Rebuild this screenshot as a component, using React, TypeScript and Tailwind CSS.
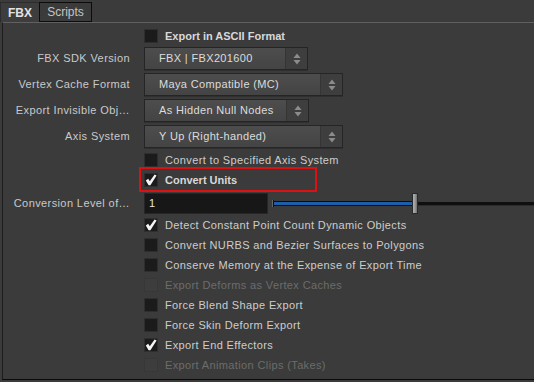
import React from 'react'

const font = "font-['Liberation_Sans',Arial,sans-serif]"

type Opt = {
    label: string;
    checked?: boolean;
    disabled?: boolean;
    bold?: boolean;
};

const CheckMark = () => (
    <svg width="12" height="12" viewBox="0 0 12 12" className="block">
        <path d="M0.8 6.4 L3.2 4.8 L4.8 7.2 L9.6 0.6 L11.6 1.4 L5.4 11.2 L3.6 11.2 Z" fill="#f4f4f4" />
    </svg>
)

const CheckBox = ({ checked, disabled }: { checked?: boolean; disabled?: boolean }) => (
    <div
        className={`w-[14px] h-[14px] flex items-center justify-center border ${
            disabled ? 'bg-[#3d3d3d] border-[#373737]' : 'bg-[#1b1b1b] border-[#2e2e2e]'
        }`}
    >
        {checked && <CheckMark />}
    </div>
)

const CheckRow = ({ label, checked, disabled, bold }: Opt) => (
    <div className="grid grid-cols-[141px_1fr] h-[20px] items-center">
        <div />
        <div className="flex items-center gap-[7px]">
            <CheckBox checked={checked} disabled={disabled} />
            <span
                className={`text-[11px] whitespace-nowrap ${bold ? 'font-bold text-[#d8d8d8]' : 'tracking-[0.37px]'} ${
                    disabled ? 'text-[#6c6c6c]' : 'text-[#cdcdcd]'
                }`}
            >
                {label}
            </span>
        </div>
    </div>
)

const Arrows = () => (
    <svg width="8" height="12" viewBox="0 0 8 12">
        <path d="M4 0.5 L7.5 5 L0.5 5 Z" fill="#8c8c8c" />
        <path d="M4 11.5 L7.5 7 L0.5 7 Z" fill="#8c8c8c" />
    </svg>
)

const Select = ({ label, value, w }: { label: string; value: string; w: string }) => (
    <div className="grid grid-cols-[141px_1fr] items-center">
        <div className="text-right pr-[14px] text-[11px] tracking-[0.4px] text-[#c9c9c9] whitespace-nowrap">{label}</div>
        <div
            className={`${w} h-[23px] flex border border-[#252525] bg-gradient-to-b from-[#4d4d4d] to-[#444444] shadow-[0_1px_0_#2f2f2f]`}
        >
            <div className="flex-1 flex items-center pl-[14px] text-[11px] tracking-[0.35px] text-[#dcdcdc] whitespace-nowrap">
                {value}
            </div>
            <div className="w-[22px] flex items-center justify-center bg-[#3e3e3e] border-l border-[#353535]">
                <Arrows />
            </div>
        </div>
    </div>
)

const Slider = () => (
    <div className="flex-1 h-[21px] flex items-center ml-[4px]">
        <div className="w-[2px] h-[7px] bg-[#111] border-l border-[#666]" />
        <div className="w-[138px] h-[5px] bg-[#1d5ea8] border-y border-[#0d0d0d]" />
        <div className="w-[6px] h-[21px] bg-gradient-to-r from-[#b0b0b0] via-[#9a9a9a] to-[#707070] border border-[#2a2a2a]" />
        <div className="flex-1 h-[4px] bg-[#0f0f0f] border-b border-[#2b2b2b]" />
    </div>
)

const bottomRows: Opt[] = [
    { label: 'Detect Constant Point Count Dynamic Objects', checked: true },
    { label: 'Convert NURBS and Bezier Surfaces to Polygons' },
    { label: 'Conserve Memory at the Expense of Export Time' },
    { label: 'Export Deforms as Vertex Caches', disabled: true },
    { label: 'Force Blend Shape Export' },
    { label: 'Force Skin Deform Export' },
    { label: 'Export End Effectors', checked: true },
    { label: 'Export Animation Clips (Takes)', disabled: true },
]

export default function App() {
    return (
        <div className={`w-[534px] h-[382px] bg-[#3b3b3b] overflow-hidden ${font}`}>
            {/* tabs */}
            <div className="h-[22px] flex items-end pt-[2px]">
                <div className="w-[39px] h-[20px] flex items-center justify-center border-t border-l border-[#2c2c2c] bg-[#3d3d3d] text-[12px] font-bold text-[#e2e2e2]">
                    FBX
                </div>
                <div className="w-[53px] h-[20px] flex items-center justify-center border border-[#0c0c0c] text-[12px] text-[#c4c4c4]">
                    Scripts
                </div>
            </div>

            <div className="ml-[2px] h-[358px] border-l border-[#1c1c1c] border-t border-t-[#606060] border-b border-b-[#0a0a0a] pt-[3px]">
                <CheckRow label="Export in ASCII Format" bold />

                <div className="flex flex-col gap-[3px] mt-[1px]">
                    <Select label="FBX SDK Version" value="FBX | FBX201600" w="w-[164px]" />
                    <Select label="Vertex Cache Format" value="Maya Compatible (MC)" w="w-[199px]" />
                    <Select label="Export Invisible Obj…" value="As Hidden Null Nodes" w="w-[165px]" />
                    <Select label="Axis System" value="Y Up (Right-handed)" w="w-[199px]" />
                </div>

                <div className="mt-[2px]">
                    <CheckRow label="Convert to Specified Axis System" />
                </div>
                <div className="relative">
                    <CheckRow label="Convert Units" checked bold />
                    <div className="absolute left-[136px] top-[-3px] w-[178px] h-[25px] border-2 border-[#dd1111] pointer-events-none" />
                </div>

                <div className="grid grid-cols-[141px_1fr] items-center mt-[3px] h-[21px]">
                    <div className="text-right pr-[14px] text-[11px] tracking-[0.4px] text-[#c9c9c9] whitespace-nowrap">
                        Conversion Level of…
                    </div>
                    <div className="flex items-center">
                        <div className="w-[124px] h-[21px] bg-[#171717] border border-[#262626] flex items-center pl-[4px] text-[11px] text-[#e6e6e6]">
                            1
                        </div>
                        <Slider />
                    </div>
                </div>

                <div className="mt-[1px]">
                    {bottomRows.map((r, i) => (
                        <CheckRow key={i} {...r} />
                    ))}
                </div>
            </div>
        </div>
    )
}
